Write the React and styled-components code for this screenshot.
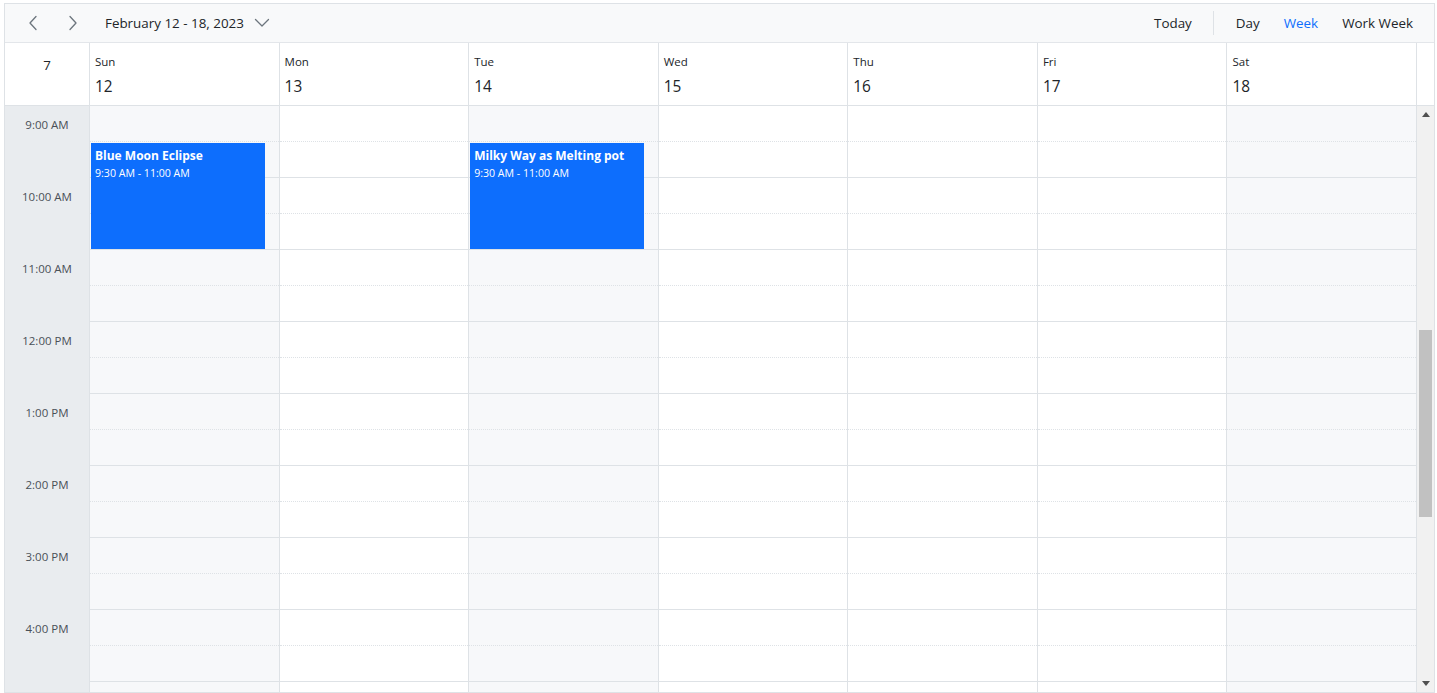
import styled, { createGlobalStyle } from "styled-components";

const GlobalStyle = createGlobalStyle`
  html, body {
    margin: 0;
    padding: 0;
    background: #fff;
  }
  body {
    font-family: "Open Sans", "Noto Sans", sans-serif;
    color: #212529;
  }
`;

const Scheduler = styled.div`
  margin: 3px 0 0 4px;
  width: 1431px;
  height: 690px;
  box-sizing: border-box;
  border: 1px solid #dee2e6;
  display: flex;
  flex-direction: column;
  overflow: hidden;
  background: #fff;
`;

const Toolbar = styled.div`
  height: 39px;
  flex-shrink: 0;
  box-sizing: border-box;
  background: #f8f9fa;
  border-bottom: 1px solid #e3e6ea;
  display: flex;
  align-items: center;
  padding: 0 9px 0 8px;
`;

const ToolGroup = styled.div`
  display: flex;
  align-items: center;
  margin-left: ${(p) => (p.$right ? "auto" : "0")};
`;

const IconButton = styled.button`
  width: 40px;
  height: 32px;
  border: 0;
  background: transparent;
  display: flex;
  align-items: center;
  justify-content: center;
  padding: 0;
  cursor: pointer;
`;

const DateRange = styled.button`
  margin-left: 12px;
  border: 0;
  background: transparent;
  display: flex;
  align-items: center;
  gap: 10px;
  padding: 0;
  font-family: inherit;
  font-size: 13.4px;
  color: #212529;
  cursor: pointer;
`;

const ViewButton = styled.button`
  border: 0;
  background: transparent;
  padding: 0 12px;
  height: 32px;
  font-family: inherit;
  font-size: 13.4px;
  color: ${(p) => (p.$active ? "#0d6efd" : "#212529")};
  cursor: pointer;
`;

const Separator = styled.div`
  width: 1px;
  height: 24px;
  background: #dee2e6;
  margin: 0 10px 0 9px;
`;

const HeaderRow = styled.div`
  display: flex;
  height: 63px;
  flex-shrink: 0;
  box-sizing: border-box;
  border-bottom: 1px solid #dee2e6;
`;

const WeekNumber = styled.div`
  width: 85px;
  flex-shrink: 0;
  box-sizing: border-box;
  border-right: 1px solid #dee2e6;
  text-align: center;
  padding-top: 12px;
  font-size: 13.4px;
  line-height: 20px;
  color: #212529;
`;

const DayHeader = styled.div`
  flex: 1;
  min-width: 0;
  box-sizing: border-box;
  border-right: 1px solid #dee2e6;
  padding: 11px 5px 0;
`;

const DayName = styled.div`
  font-size: 11.5px;
  line-height: 16px;
  color: #212529;
`;

const DayDate = styled.div`
  margin-top: 7px;
  font-size: 15.4px;
  line-height: 20px;
  color: #212529;
`;

const ScrollGap = styled.div`
  width: 17px;
  flex-shrink: 0;
`;

const Body = styled.div`
  flex: 1;
  display: flex;
  overflow: hidden;
`;

const TimeColumn = styled.div`
  width: 85px;
  flex-shrink: 0;
  box-sizing: border-box;
  background: #e9ecef;
  border-right: 1px solid #dee2e6;
`;

const TimeSlot = styled.div`
  height: 72px;
`;

const TimeLabel = styled.div`
  height: 36px;
  display: flex;
  align-items: center;
  justify-content: center;
  font-size: 11.5px;
  color: #495057;
`;

const DayColumn = styled.div`
  flex: 1;
  min-width: 0;
  position: relative;
  box-sizing: border-box;
  border-right: 1px solid #dee2e6;
  background: ${(p) => (p.$shaded ? "#f7f8fa" : "#fff")};
`;

const HalfCell = styled.div`
  height: 36px;
  box-sizing: border-box;
  border-bottom: 1px ${(p) => (p.$half ? "dotted" : "solid")} #dee2e6;
`;

const Event = styled.div`
  position: absolute;
  left: 1px;
  right: 14px;
  top: ${(p) => p.$top}px;
  height: ${(p) => p.$height}px;
  background: #0d6efd;
  color: #fff;
  padding: 5px 4px 0;
  box-sizing: border-box;
`;

const EventTitle = styled.div`
  font-size: 12px;
  font-weight: 700;
  line-height: 16px;
  white-space: nowrap;
  overflow: hidden;
`;

const EventTime = styled.div`
  margin-top: 2px;
  font-size: 10.6px;
  line-height: 14px;
`;

const ScrollTrack = styled.div`
  width: 17px;
  flex-shrink: 0;
  background: #f1f1f1;
  display: flex;
  flex-direction: column;
  align-items: center;
  justify-content: space-between;
  padding: 6px 0;
  box-sizing: border-box;
  position: relative;
`;

const Thumb = styled.div`
  position: absolute;
  left: 2px;
  right: 2px;
  top: 224px;
  height: 187px;
  background: #c1c1c1;
`;

const Chevron = ({ dir }) => (
  <svg width="10" height="16" viewBox="0 0 10 16" fill="none">
    <polyline
      points={dir === "left" ? "8,1.5 2,8 8,14.5" : "2,1.5 8,8 2,14.5"}
      stroke="#6c757d"
      strokeWidth="1.3"
      strokeLinecap="round"
      strokeLinejoin="round"
    />
  </svg>
);

const ChevronDown = () => (
  <svg width="16" height="10" viewBox="0 0 16 10" fill="none">
    <polyline
      points="1.5,1.5 8,8 14.5,1.5"
      stroke="#6c757d"
      strokeWidth="1.3"
      strokeLinecap="round"
      strokeLinejoin="round"
    />
  </svg>
);

const Arrow = ({ up }) => (
  <svg width="8" height="5" viewBox="0 0 8 5">
    <polygon points={up ? "0,5 8,5 4,0" : "0,0 8,0 4,5"} fill="#505050" />
  </svg>
);

const days = [
  { name: "Sun", date: 12, shaded: true },
  { name: "Mon", date: 13 },
  { name: "Tue", date: 14, shaded: true },
  { name: "Wed", date: 15 },
  { name: "Thu", date: 16 },
  { name: "Fri", date: 17 },
  { name: "Sat", date: 18, shaded: true },
];

// last slot (5 PM) sits below the fold, so it carries no label
const hours = ["9:00 AM", "10:00 AM", "11:00 AM", "12:00 PM", "1:00 PM", "2:00 PM", "3:00 PM", "4:00 PM", ""];

const events = {
  Sun: { title: "Blue Moon Eclipse", time: "9:30 AM - 11:00 AM" },
  Tue: { title: "Milky Way as Melting pot", time: "9:30 AM - 11:00 AM" },
};

export default function App() {
  return (
    <>
      <GlobalStyle />
      <Scheduler>
        <Toolbar>
          <ToolGroup>
            <IconButton aria-label="Previous">
              <Chevron dir="left" />
            </IconButton>
            <IconButton aria-label="Next">
              <Chevron dir="right" />
            </IconButton>
            <DateRange>
              February 12 - 18, 2023
              <ChevronDown />
            </DateRange>
          </ToolGroup>
          <ToolGroup $right>
            <ViewButton>Today</ViewButton>
            <Separator />
            <ViewButton>Day</ViewButton>
            <ViewButton $active>Week</ViewButton>
            <ViewButton>Work Week</ViewButton>
          </ToolGroup>
        </Toolbar>

        <HeaderRow>
          <WeekNumber>7</WeekNumber>
          {days.map((d) => (
            <DayHeader key={d.name}>
              <DayName>{d.name}</DayName>
              <DayDate>{d.date}</DayDate>
            </DayHeader>
          ))}
          <ScrollGap />
        </HeaderRow>

        <Body>
          <TimeColumn>
            {hours.map((h, i) => (
              <TimeSlot key={i}>
                <TimeLabel>{h}</TimeLabel>
              </TimeSlot>
            ))}
          </TimeColumn>
          {days.map((d) => (
            <DayColumn key={d.name} $shaded={d.shaded}>
              {hours.map((h, i) => (
                <div key={i}>
                  <HalfCell $half />
                  <HalfCell />
                </div>
              ))}
              {events[d.name] && (
                <Event $top={37} $height={106}>
                  <EventTitle>{events[d.name].title}</EventTitle>
                  <EventTime>{events[d.name].time}</EventTime>
                </Event>
              )}
            </DayColumn>
          ))}
          <ScrollTrack>
            <Arrow up />
            <Thumb />
            <Arrow />
          </ScrollTrack>
        </Body>
      </Scheduler>
    </>
  );
}
